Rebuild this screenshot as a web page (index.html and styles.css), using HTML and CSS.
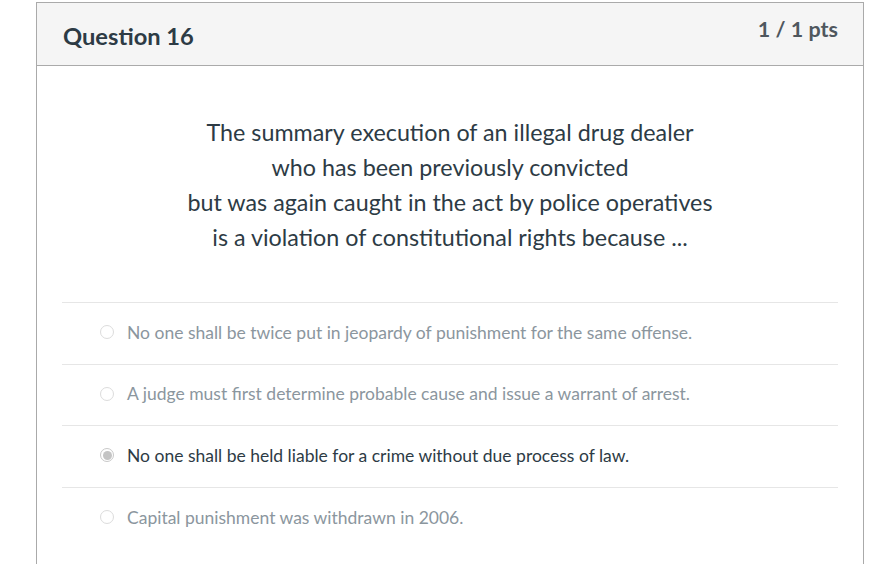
FILE: index.html
```html
<!DOCTYPE html>
<html>
<head>
<meta charset="utf-8">
<link rel="stylesheet" href="styles.css">
</head>
<body>
<div class="card">
  <div class="card-header">
    <h2 class="q-title">Question 16</h2>
    <div class="q-points">1 / 1 pts</div>
  </div>
  <div class="card-body">
    <div class="q-text">
      <p>The summary execution of an illegal drug dealer<br>who has been previously convicted<br>but was again caught in the act by police operatives<br>is a violation of constitutional rights because ...</p>
    </div>
    <div class="answers">
      <div class="answer"><span class="radio"></span><span class="a-text">No one shall be twice put in jeopardy of punishment for the same offense.</span></div>
      <div class="answer"><span class="radio"></span><span class="a-text">A judge must first determine probable cause and issue a warrant of arrest.</span></div>
      <div class="answer selected"><span class="radio"></span><span class="a-text">No one shall be held liable for a crime without due process of law.</span></div>
      <div class="answer"><span class="radio"></span><span class="a-text">Capital punishment was withdrawn in 2006.</span></div>
    </div>
  </div>
</div>
</body>
</html>
```

FILE: styles.css
```css
html, body {
  margin: 0;
  padding: 0;
  background: #ffffff;
  overflow: hidden;
}
body {
  font-family: Lato, "Open Sans", sans-serif;
  color: #2d3b45;
  padding: 2px 0 0 36px;
  height: 562px;
}
.card {
  width: 828px;
  box-sizing: border-box;
  border: 1px solid #aaaaaa;
  border-bottom: none;
  height: 600px;
}
.card-header {
  background: #f5f5f5;
  border-bottom: 1px solid #aaaaaa;
  height: 63px;
  box-sizing: border-box;
  display: flex;
  justify-content: space-between;
  align-items: flex-start;
  padding: 0 25px 0 26px;
}
.q-title {
  margin: 0;
  padding-top: 18px;
  font-size: 23.7px;
  font-weight: 700;
  line-height: 30px;
  color: #2d3b45;
}
.q-points {
  padding-top: 12px;
  font-size: 21.5px;
  font-weight: 700;
  line-height: 28px;
  color: #4f575e;
}
.card-body {
  padding: 0 25px;
}
.q-text {
  padding-top: 49px;
  padding-bottom: 47px;
  text-align: center;
}
.q-text p {
  margin: 0;
  font-size: 23.3px;
  line-height: 35px;
  color: #2d3b45;
}
.answer {
  display: flex;
  align-items: center;
  gap: 13px;
  border-top: 1px solid #e6e6e6;
  padding: 0 0 2px 38px;
  height: 61.6px;
  box-sizing: border-box;
  font-size: 17.5px;
  color: #8b969e;
}
.answer.selected {
  color: #2d3b45;
}
.radio {
  width: 14px;
  height: 14px;
  border: 1px solid #dcdcdc;
  border-radius: 50%;
  box-sizing: border-box;
  flex: none;
  display: flex;
  align-items: center;
  justify-content: center;
}
.answer.selected .radio {
  border-color: #c8c8c8;
}
.answer.selected .radio::after {
  content: "";
  width: 9px;
  height: 9px;
  border-radius: 50%;
  background: #c4c4c4;
}
```
